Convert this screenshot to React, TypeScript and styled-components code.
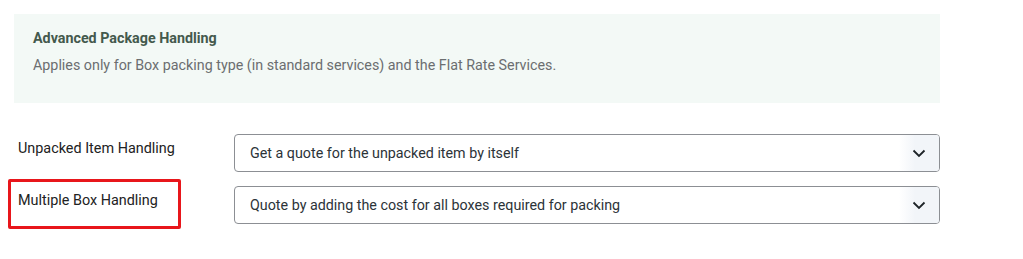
import React from "react";
import styled, { createGlobalStyle } from "styled-components";

const GlobalStyle = createGlobalStyle`
  html, body {
    margin: 0;
    padding: 0;
    background: #ffffff;
    font-family: Roboto, "Liberation Sans", sans-serif;
  }
`;

const Page = styled.div`
  width: 1023px;
  height: 259px;
  padding: 14px 0 0 0;
  box-sizing: border-box;
`;

const Notice = styled.div`
  margin-left: 14px;
  width: 926px;
  height: 89px;
  box-sizing: border-box;
  background: #f3f9f6;
  padding: 16px 19px 0;
`;

const NoticeTitle = styled.div`
  font-size: 14.3px;
  font-weight: 700;
  color: #44594d;
  line-height: 17px;
`;

const NoticeText = styled.div`
  margin-top: 10px;
  font-size: 14.3px;
  color: #6b6e70;
  line-height: 17px;
`;

const Form = styled.div`
  margin-top: 31px;
  display: flex;
  flex-direction: column;
  gap: 14px;
`;

const Row = styled.div`
  display: grid;
  grid-template-columns: 234px 706px;
  align-items: start;
`;

const LabelCell = styled.div`
  position: relative;
  padding: 6px 0 0 18px;
  font-size: 14.4px;
  color: #222;
  line-height: 17px;
`;

const Highlight = styled.span`
  position: absolute;
  left: 8px;
  top: -7px;
  width: 173px;
  height: 50px;
  box-sizing: border-box;
  border: 3px solid #e8161b;
  border-radius: 2px;
`;

const Select = styled.div`
  height: 38px;
  box-sizing: border-box;
  border: 1px solid #8c8f94;
  border-radius: 4px;
  display: flex;
  align-items: center;
  justify-content: space-between;
  padding: 0 0 0 15px;
  font-size: 14.3px;
  color: #2c3338;
  background: #ffffff;
  overflow: hidden;
`;

const Chevron = styled.span`
  width: 40px;
  align-self: stretch;
  display: flex;
  align-items: center;
  justify-content: center;
  background: linear-gradient(to right, #ffffff 0%, #f2f5f9 40%, #f2f5f9 100%);
`;

const ChevronIcon = () => (
  <svg width="14" height="10" viewBox="0 0 14 10">
    <path d="M1.5 2.5 L7 8 L12.5 2.5" fill="none" stroke="#1d2327" strokeWidth="1.8" />
  </svg>
);

export default function App() {
  return (
    <>
      <GlobalStyle />
      <Page>
        <Notice>
          <NoticeTitle>Advanced Package Handling</NoticeTitle>
          <NoticeText>
            Applies only for Box packing type (in standard services) and the Flat Rate Services.
          </NoticeText>
        </Notice>
        <Form>
          <Row>
            <LabelCell>Unpacked Item Handling</LabelCell>
            <Select>
              Get a quote for the unpacked item by itself
              <Chevron>
                <ChevronIcon />
              </Chevron>
            </Select>
          </Row>
          <Row>
            <LabelCell>
              <Highlight />
              Multiple Box Handling
            </LabelCell>
            <Select>
              Quote by adding the cost for all boxes required for packing
              <Chevron>
                <ChevronIcon />
              </Chevron>
            </Select>
          </Row>
        </Form>
      </Page>
    </>
  );
}
